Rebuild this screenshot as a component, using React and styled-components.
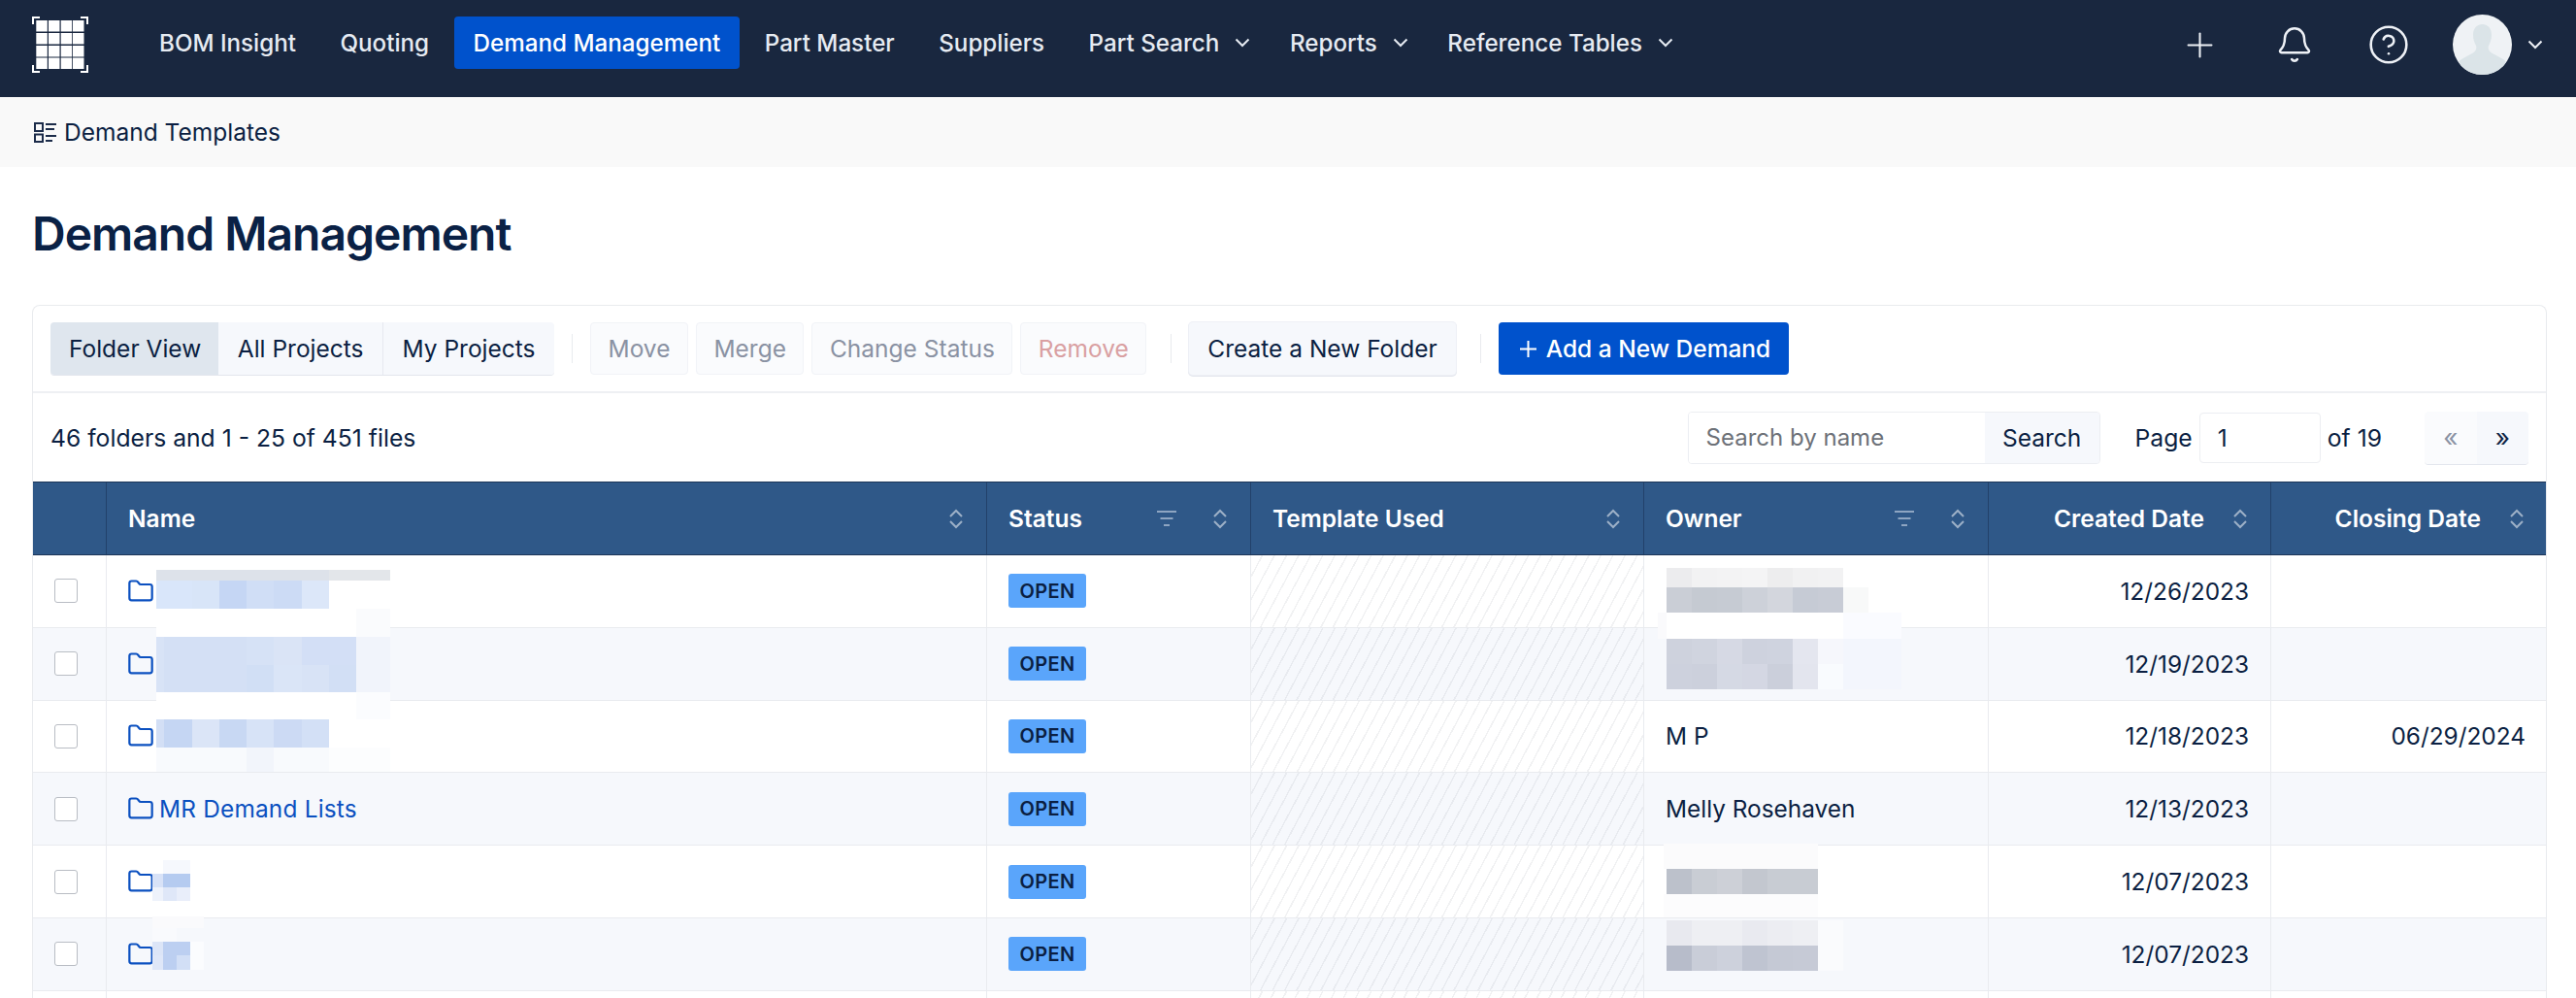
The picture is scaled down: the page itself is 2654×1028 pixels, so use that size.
import React from 'react'
import styled, { createGlobalStyle } from 'styled-components'
import { Bell, CircleHelp, Folder, Plus } from 'lucide-react'

const INK = '#0b1f42'
const COLUMNS = '76px 907px 272px 405px 355px 291px 1fr'

const GlobalStyle = createGlobalStyle`
  html, body {
    margin: 0;
    background: #fff;
    font-family: Inter, "Liberation Sans", sans-serif;
    color: ${INK};
  }
  #root {
    height: 100vh;
    overflow: hidden;
  }
  * {
    box-sizing: border-box;
  }
`

// top bar
const Nav = styled.header`
  display: flex;
  align-items: center;
  height: 100px;
  padding: 0 34px 0 33px;
  background: #19273f;
`
const NavList = styled.nav`
  display: flex;
  align-items: center;
  gap: 5.5px;
  margin-left: 53px;
`
const NavItem = styled.a`
  display: flex;
  align-items: center;
  gap: 16px;
  height: 54px;
  margin-top: -12px;
  padding: ${(p) => (p.$menu ? '0 15px 0 20px' : '0 20px')};
  border-radius: 4px;
  background: ${(p) => (p.$active ? '#0052cc' : 'transparent')};
  color: ${(p) => (p.$active ? '#fff' : '#e6ebf2')};
  font-size: 24.2px;
  font-weight: 500;
  white-space: nowrap;
`
const NavRight = styled.div`
  display: flex;
  align-items: center;
  margin-left: auto;
  color: #eef1f6;
`
const IconButton = styled.span`
  display: flex;
  align-items: center;
  justify-content: center;
  width: 97px;
  height: 44px;
  margin-top: -8px;
`
const Avatar = styled.svg`
  width: 61px;
  height: 62px;
  margin: -8px 16px 0 18px;
  border-radius: 50%;
  background: #eff2f5;
`
const UserChevron = styled.span`
  display: flex;
  margin-top: -8px;
`

// sub bar
const SubBar = styled.div`
  display: flex;
  align-items: center;
  gap: 8px;
  height: 72px;
  padding-left: 35px;
  background: #f9f9f9;
  font-size: 24.5px;
  font-weight: 400;
`
const Title = styled.h1`
  margin: 0;
  padding-left: 33px;
  font-size: 48px;
  font-weight: 600;
  letter-spacing: -1px;
  line-height: 138px;
  height: 142px;
  color: #0a2145;
`

// card
const Card = styled.section`
  margin: 0 30px 0 33px;
  border: 1px solid #e9ebee;
  border-bottom: 0;
  border-radius: 8px 8px 0 0;
`
const Toolbar = styled.div`
  display: flex;
  align-items: center;
  height: 90px;
  padding: 0 18px;
  border-bottom: 2px solid #eef0f3;
`
const Group = styled.div`
  display: flex;
  border-radius: 4px;
  overflow: hidden;
  box-shadow: 0 1px 0 #e3e6ed;
`
const Tab = styled.button`
  height: 54px;
  padding: ${(p) => (p.$active ? '0 18px 0 19px' : '0 19.5px')};
  border: 0;
  border-left: ${(p) => (p.$divided ? '1px solid #e6e9f0' : '0')};
  background: ${(p) => (p.$active ? '#dfe6ee' : '#f6f8fc')};
  color: ${INK};
  font: 400 24.5px Inter, sans-serif;
`
const Divider = styled.span`
  width: 1px;
  height: 30px;
  margin: 0 18px 0 ${(p) => (p.$wide ? '25px' : '18px')};
  background: #e9ebee;
`
const ActionGroup = styled.div`
  display: flex;
  gap: 8px;
`
const Action = styled.button`
  height: 54px;
  padding: 0 17.5px;
  border: 1px solid #f1f3f7;
  border-radius: 4px;
  background: #fafbfd;
  color: ${(p) => (p.$danger ? '#d9a0a2' : '#8a92a3')};
  font: 400 24.5px Inter, sans-serif;
`
const SecondaryButton = styled.button`
  height: 54px;
  padding: 0 19px;
  border: 0;
  border-radius: 4px;
  background: #f6f8fc;
  box-shadow: 0 0 0 1px #eef0f6, 0 1px 0 1px #e3e6ed;
  color: ${INK};
  font: 400 24.5px Inter, sans-serif;
`
const PrimaryButton = styled.button`
  display: flex;
  align-items: center;
  gap: 10px;
  height: 54px;
  padding: 0 19px 0 22px;
  border: 0;
  border-radius: 4px;
  background: #0052cc;
  color: #fff;
  font: 500 24.5px Inter, sans-serif;
`
const InfoRow = styled.div`
  display: flex;
  align-items: center;
  justify-content: space-between;
  height: 91px;
  padding: 0 18px;
  font-size: 24.7px;
`
const InfoRight = styled.div`
  display: flex;
  align-items: center;
`
const SearchGroup = styled.div`
  display: flex;
  height: 54px;
  border: 1px solid #eceef2;
  border-radius: 4px;
  overflow: hidden;
`
const SearchInput = styled.input`
  width: 305px;
  padding: 0 18px;
  border: 0;
  outline: 0;
  color: ${INK};
  font: 400 24px Inter, sans-serif;
  &::placeholder {
    color: #6d7178;
  }
`
const SearchButton = styled.button`
  width: 118px;
  border: 0;
  background: #f6f8fc;
  color: ${INK};
  font: 400 24.5px Inter, sans-serif;
`
const PageLabel = styled.span`
  margin-left: 36px;
`
const PageInput = styled.input`
  width: 125px;
  height: 52px;
  margin: 0 7px;
  padding: 0 18px;
  border: 1px solid #eceef2;
  border-radius: 4px;
  outline: 0;
  color: ${INK};
  font: 400 24.5px Inter, sans-serif;
`
const Pager = styled.div`
  display: flex;
  height: 54px;
  margin-left: 44px;
  border-radius: 4px;
  overflow: hidden;
  box-shadow: 0 1px 0 #e3e6ed;
`
const PagerButton = styled.button`
  width: 53.5px;
  border: 0;
  background: ${(p) => (p.$disabled ? '#fafbfd' : '#f6f8fc')};
  color: ${(p) => (p.$disabled ? '#8a92a3' : INK)};
  font: 400 26px Inter, sans-serif;
`

// table
const TableHead = styled.div`
  display: grid;
  grid-template-columns: ${COLUMNS};
  height: 76px;
  background: #2f5888;
  border-top: 1px solid #1d3658;
  border-bottom: 1px solid #1d3658;
`
const HeadCell = styled.div`
  display: flex;
  align-items: center;
  justify-content: ${(p) => (p.$right ? 'flex-end' : 'flex-start')};
  padding: 0 23px 0 22px;
  border-right: 1px solid #22416a;
  color: #fff;
  font-size: 24.5px;
  font-weight: 600;
  white-space: nowrap;
  &:last-child {
    padding-right: 22px;
    border-right: 0;
  }
`
const HeadLabel = styled.span`
  margin-right: ${(p) => (p.$right ? '29px' : 'auto')};
`
const FilterIcon = styled.svg`
  width: 20px;
  height: 16px;
  margin-right: 37px;
`
const TableBody = styled.div`
  position: relative;
`
const Row = styled.div`
  display: grid;
  grid-template-columns: ${COLUMNS};
  height: 74.8px;
  background: ${(p) => (p.$even ? '#f6f8fc' : '#fff')};
  border-bottom: 1px solid #e9ebef;
`
const Cell = styled.div`
  display: flex;
  align-items: center;
  justify-content: ${(p) => (p.$right ? 'flex-end' : 'flex-start')};
  padding: 0 22px;
  border-right: 1px solid #e9ebef;
  font-size: 24.4px;
  white-space: nowrap;
  &:last-child {
    padding-right: 21px;
    border-right: 0;
  }
`
const HatchCell = styled(Cell)`
  background-image: repeating-linear-gradient(
    118deg,
    transparent 0 9.5px,
    rgba(40, 50, 70, 0.065) 9.5px 11px
  );
`
const CheckBox = styled.span`
  width: 24px;
  height: 25px;
  border: 1px solid #b9bdc4;
  border-radius: 3px;
  background: #fff;
`
const NameLink = styled.a`
  display: flex;
  align-items: center;
  gap: 5px;
  margin-left: -1px;
  color: #0b50c0;
  letter-spacing: 0.2px;
`
const Badge = styled.span`
  display: flex;
  align-items: center;
  justify-content: center;
  width: 80px;
  height: 35px;
  border-radius: 3px;
  background: #5aa5fb;
  color: ${INK};
  font-size: 20px;
  font-weight: 600;
  letter-spacing: 0.4px;
`
const Redactions = styled.svg`
  position: absolute;
  top: 0;
  left: 0;
  width: 2589px;
  height: 455px;
  pointer-events: none;
`
const LogoMark = styled.svg`
  width: 58px;
  height: 58px;
  margin-top: -8px;
`

const Logo = () => {
  const steps = [37.3, 50, 62.7, 75]
  const rows = [21, 34, 47, 59.5]
  return (
    <LogoMark viewBox="33 17 58 58">
      {rows.map((y) =>
        steps.map((x) => <rect key={`${x}-${y}`} x={x} y={y} width="11.5" height="11.5" fill="#fff" />),
      )}
      <path
        d="M34 25v-7h7M83 18h7v7M34 67v7h7M90 67v7h-7"
        fill="none"
        stroke="#fff"
        strokeWidth="2"
      />
    </LogoMark>
  )
}

const Chevron = () => (
  <svg width="16" height="10" viewBox="0 0 16 10" fill="none">
    <path d="M1.5 1.5 8 8l6.5-6.5" stroke="currentColor" strokeWidth="2" />
  </svg>
)

const TemplatesIcon = () => (
  <svg width="23" height="21" viewBox="0 0 23 21" fill="none" stroke="#1c2c4a" strokeWidth="2">
    <rect x="1" y="1" width="8" height="8" />
    <rect x="1" y="12.5" width="8" height="7.5" />
    <path d="M12 2h11M12 7h9M12 14h11M12 19h7" />
  </svg>
)

const SortIcon = () => (
  <svg width="16" height="21" viewBox="0 0 16 21" fill="none" stroke="#9db0c7" strokeWidth="2">
    <path d="M2 8l6-6 6 6M2 13l6 6 6-6" />
  </svg>
)

const Filter = () => (
  <FilterIcon viewBox="0 0 20 16" fill="none" stroke="#8ea5c2" strokeWidth="2">
    <path d="M0 1h20M3.5 8h13M7 15h6" />
  </FilterIcon>
)

// pixelated names: [top, height, x edges, colours], in page coordinates
const MOSAIC = [
  [588, 11, [161, 339, 402], ['#dde2ea', '#e3e6ea']],
  [599, 29, [161, 198, 226, 254, 282, 311, 339], ['#d9e6fa', '#d8e5f8', '#c5d6f4', '#d0def6', '#ccdbf5', '#dce7f9']],
  [628, 29, [161, 367, 402], ['#ffffff', '#fafbfd']],
  [657, 29, [161, 169, 254, 282, 311, 367, 402], ['#d8e3f6', '#d4e0f5', '#d6e2f6', '#dae4f6', '#d3dff6', '#f1f4fb']],
  [686, 28, [161, 169, 254, 282, 311, 339, 367, 402], ['#d8e3f6', '#d4e0f5', '#d1dff5', '#dae5f7', '#d8e3f6', '#d2dff5', '#f1f4fb']],
  [714, 28, [161, 367, 402], ['#ffffff', '#fbfcfe']],
  [742, 29, [161, 169, 198, 226, 254, 282, 311, 339], ['#d3dff5', '#c5d6f3', '#dbe5f7', '#c8d8f3', '#d7e3f7', '#ccdaf4', '#d3e0f6']],
  [771, 25, [161, 254, 282, 339, 402], ['#f8fafd', '#f2f5fb', '#f8fafd', '#fcfdfe']],
  [887, 14, [157, 168, 196], ['#ffffff', '#f6f8fd']],
  [901, 14, [157, 168, 196], ['#d8e2f7', '#b5cbf0']],
  [915, 14, [157, 168, 182, 196], ['#eef2fb', '#dfe7f8', '#e9eefa']],
  [945, 12, [157, 210], ['#fafafc']],
  [957, 14, [157, 182], ['#f9fafd']],
  [971, 14, [157, 168, 196, 210], ['#dce5f7', '#bccff1', '#fbfcfe']],
  [985, 15, [157, 168, 182, 196, 210], ['#dfe7f8', '#bccff1', '#d2dff6', '#fbfcfe']],
  [586, 20, [1717, 1743, 1769, 1795, 1821, 1847, 1873, 1899], ['#ececee', '#f2f2f3', '#f3f3f4', '#f4f4f5', '#ededee', '#f1f1f2', '#f2f2f3']],
  [606, 26, [1717, 1743, 1769, 1795, 1821, 1847, 1873, 1899, 1925], ['#caced6', '#c5cad2', '#c6cbd3', '#cdd1d9', '#d3d6dd', '#c6cbd5', '#c8ccd6', '#f8f9f9']],
  [632, 27, [1708, 1717, 1899, 1959], ['#fafafc', '#ffffff', '#fafbff']],
  [659, 26, [1717, 1743, 1769, 1795, 1821, 1847, 1873, 1899, 1959], ['#ced2dd', '#d0d4df', '#d6d9e4', '#ced2de', '#cfd3df', '#e4e6ef', '#f6f7fc', '#f3f6fd']],
  [685, 26, [1717, 1743, 1769, 1795, 1821, 1847, 1873, 1899, 1959], ['#cdd1dd', '#ccd0dc', '#d5d9e4', '#d4d7e3', '#cbcfdb', '#e3e5ee', '#f9fbfe', '#f3f6fd']],
  [870, 26, [1714, 1873], ['#fbfbfc']],
  [896, 26, [1717, 1743, 1769, 1795, 1821, 1847, 1873], ['#bcc1cb', '#c9cdd4', '#cdd0d7', '#c3c7cf', '#c8ccd3', '#c8ccd3']],
  [922, 24, [1714, 1873], ['#fcfcfd']],
  [949, 26, [1717, 1743, 1769, 1795, 1821, 1847, 1873, 1899], ['#e8e9ef', '#eeeff3', '#eeeff3', '#e9eaf0', '#ecedf2', '#eeeff3', '#fafbfd']],
  [975, 26, [1717, 1743, 1769, 1795, 1821, 1847, 1873, 1899], ['#b7bcca', '#c9cdd8', '#cdd1dc', '#bfc4d1', '#c5c9d5', '#c6cad6', '#fafbfd']],
]

const navItems = [
  { label: 'BOM Insight' },
  { label: 'Quoting' },
  { label: 'Demand Management', active: true },
  { label: 'Part Master' },
  { label: 'Suppliers' },
  { label: 'Part Search', menu: true },
  { label: 'Reports', menu: true },
  { label: 'Reference Tables', menu: true },
]

const rows = [
  { owner: '', created: '12/26/2023', closing: '' },
  { owner: '', created: '12/19/2023', closing: '' },
  { owner: 'M P', created: '12/18/2023', closing: '06/29/2024' },
  { name: 'MR Demand Lists', owner: 'Melly Rosehaven', created: '12/13/2023', closing: '' },
  { owner: '', created: '12/07/2023', closing: '' },
  { owner: '', created: '12/07/2023', closing: '' },
]

function App() {
  return (
    <>
      <GlobalStyle />
      <Nav>
        <Logo />
        <NavList>
          {navItems.map((item) => (
            <NavItem key={item.label} $active={item.active} $menu={item.menu}>
              {item.label}
              {item.menu && <Chevron />}
            </NavItem>
          ))}
        </NavList>
        <NavRight>
          <IconButton>
            <Plus size={41} strokeWidth={1.2} />
          </IconButton>
          <IconButton>
            <Bell size={40} strokeWidth={1.5} />
          </IconButton>
          <IconButton>
            <CircleHelp size={44} strokeWidth={1.4} />
          </IconButton>
          <Avatar viewBox="0 0 61 62">
            <path
              d="M30.5 10c6.5 0 9.500 5 9.500 11 0 5-1.500 8-3 11-1 3 0 6 4 8l11 6c3 2 5 6 5 16H4c0-10 2-14 5-16l11-6c4-2 5-5 4-8-1.500-3-3-6-3-11 0-6 3-11 9.500-11z"
              fill="#dbe4e8"
            />
          </Avatar>
          <UserChevron>
            <Chevron />
          </UserChevron>
        </NavRight>
      </Nav>

      <SubBar>
        <TemplatesIcon />
        Demand Templates
      </SubBar>

      <Title>Demand Management</Title>

      <Card>
        <Toolbar>
          <Group>
            <Tab $active>Folder View</Tab>
            <Tab>All Projects</Tab>
            <Tab $divided>My Projects</Tab>
          </Group>
          <Divider />
          <ActionGroup>
            <Action>Move</Action>
            <Action>Merge</Action>
            <Action>Change Status</Action>
            <Action $danger>Remove</Action>
          </ActionGroup>
          <Divider $wide />
          <SecondaryButton>Create a New Folder</SecondaryButton>
          <Divider $wide />
          <PrimaryButton>
            <svg width="17" height="17" viewBox="0 0 17 17" stroke="#fff" strokeWidth="2">
              <path d="M8.500 0v17M0 8.500h17" />
            </svg>
            Add a New Demand
          </PrimaryButton>
        </Toolbar>

        <InfoRow>
          <span>46 folders and 1 - 25 of 451 files</span>
          <InfoRight>
            <SearchGroup>
              <SearchInput placeholder="Search by name" />
              <SearchButton>Search</SearchButton>
            </SearchGroup>
            <PageLabel>Page</PageLabel>
            <PageInput defaultValue="1" />
            <span>of 19</span>
            <Pager>
              <PagerButton $disabled>«</PagerButton>
              <PagerButton>»</PagerButton>
            </Pager>
          </InfoRight>
        </InfoRow>

        <TableHead>
          <HeadCell />
          <HeadCell>
            <HeadLabel>Name</HeadLabel>
            <SortIcon />
          </HeadCell>
          <HeadCell>
            <HeadLabel>Status</HeadLabel>
            <Filter />
            <SortIcon />
          </HeadCell>
          <HeadCell>
            <HeadLabel>Template Used</HeadLabel>
            <SortIcon />
          </HeadCell>
          <HeadCell>
            <HeadLabel>Owner</HeadLabel>
            <Filter />
            <SortIcon />
          </HeadCell>
          <HeadCell $right>
            <HeadLabel $right>Created Date</HeadLabel>
            <SortIcon />
          </HeadCell>
          <HeadCell $right>
            <HeadLabel $right>Closing Date</HeadLabel>
            <SortIcon />
          </HeadCell>
        </TableHead>

        <TableBody>
          {rows.map((row, i) => (
            <Row key={i} $even={i % 2 === 1}>
              <Cell>
                <CheckBox />
              </Cell>
              <Cell>
                <NameLink>
                  <Folder size={28} strokeWidth={1.9} />
                  {row.name}
                </NameLink>
              </Cell>
              <Cell>
                <Badge>OPEN</Badge>
              </Cell>
              <HatchCell />
              <Cell>{row.owner}</Cell>
              <Cell $right>{row.created}</Cell>
              <Cell $right>{row.closing}</Cell>
            </Row>
          ))}
          <Row>
            <Cell />
            <Cell />
            <Cell />
            <HatchCell />
            <Cell />
            <Cell />
            <Cell />
          </Row>
          <Redactions viewBox="34 573 2589 455" shapeRendering="crispEdges">
            {MOSAIC.map(([top, height, edges, colours]) =>
              colours.map((fill, c) => (
                <rect
                  key={`${top}-${edges[c]}`}
                  x={edges[c]}
                  y={top}
                  width={edges[c + 1] - edges[c]}
                  height={height}
                  fill={fill}
                />
              )),
            )}
          </Redactions>
        </TableBody>
      </Card>
    </>
  )
}

export default App
